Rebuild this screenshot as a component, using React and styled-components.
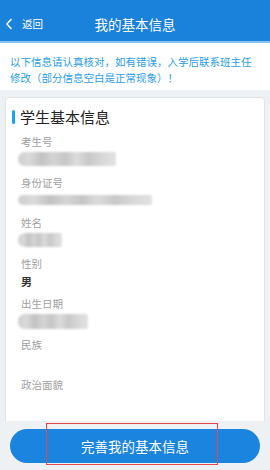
import styled, { createGlobalStyle } from "styled-components";

const GlobalStyle = createGlobalStyle`
  html, body {
    margin: 0;
    padding: 0;
  }
  body {
    font-family: "Noto Sans CJK SC", "Noto Sans", sans-serif;
  }
`;

const fields = [
  { label: "考生号", blur: { width: 98, height: 14 } },
  { label: "身份证号", blur: { width: 134, height: 10 } },
  { label: "姓名", blur: { width: 44, height: 14 } },
  { label: "性别", value: "男" },
  { label: "出生日期", blur: { width: 70, height: 15 } },
  { label: "民族" },
  { label: "政治面貌" },
  { label: "手机号" },
];

const App = () => {
  return (
    <>
      <GlobalStyle />
      <Screen>
        <Header>
          <BackButton>
            <svg width="8" height="12" viewBox="0 0 8 12">
              <path
                d="M6.5 1 L1.8 6 L6.5 11"
                fill="none"
                stroke="#fff"
                strokeWidth="1.4"
              />
            </svg>
            <span>返回</span>
          </BackButton>
          <HeaderTitle>我的基本信息</HeaderTitle>
          <div />
        </Header>
        <Notice>
          以下信息请认真核对，如有错误，入学后联系班主任修改（部分信息空白是正常现象）！
        </Notice>
        <Content>
          <Card>
            <CardTitle>学生基本信息</CardTitle>
            {fields.map((f) => (
              <Field key={f.label}>
                <Label>{f.label}</Label>
                <Value>
                  {f.value}
                  {f.blur && (
                    <Blurred
                      style={{ width: f.blur.width, height: f.blur.height }}
                    />
                  )}
                </Value>
              </Field>
            ))}
          </Card>
        </Content>
        <Footer>
          <SubmitButton>完善我的基本信息</SubmitButton>
          <Mark />
        </Footer>
      </Screen>
    </>
  );
};

const Screen = styled.div`
  width: 270px;
  height: 470px;
  display: flex;
  flex-direction: column;
  background-color: #eef1f4;
  overflow: hidden;
`;

const Header = styled.div`
  height: 43px;
  box-sizing: border-box;
  padding-top: 6px;
  flex-shrink: 0;
  display: grid;
  grid-template-columns: 60px 1fr 60px;
  align-items: center;
  background-color: #1b82dc;
  border-bottom: 2px solid #8cc0ee;
  color: white;
`;

const BackButton = styled.div`
  display: flex;
  align-items: center;
  gap: 9px;
  padding-left: 5px;
  font-size: 10.5px;
`;

const HeaderTitle = styled.div`
  text-align: center;
  font-size: 13.5px;
`;

const Notice = styled.div`
  flex-shrink: 0;
  background-color: white;
  padding: 11px 10px 4px 10px;
  color: #2a9de6;
  font-size: 10.5px;
  line-height: 16px;
`;

const Content = styled.div`
  flex: 1;
  overflow: hidden;
  padding: 7px 5px 0 5px;
`;

const Card = styled.div`
  background-color: white;
  border: 1px solid #dde3e8;
  border-radius: 4px;
  padding: 8px 0 0 15px;
  min-height: 400px;
`;

const CardTitle = styled.div`
  position: relative;
  font-size: 15px;
  line-height: 22px;
  color: #222;
  margin-left: -1px;
  margin-bottom: 6px;
  &::before {
    content: "";
    position: absolute;
    left: -8px;
    top: 4px;
    width: 3px;
    height: 14px;
    border-radius: 2px;
    background-color: #1aa3f2;
  }
`;

const Field = styled.div`
  display: flex;
  flex-direction: column;
  margin-bottom: 6.5px;
`;

const Label = styled.div`
  font-size: 10.5px;
  line-height: 16px;
  color: #a0a0a0;
`;

const Value = styled.div`
  min-height: 18px;
  display: flex;
  align-items: center;
  font-size: 11px;
  font-weight: bold;
  color: #333;
`;

const Blurred = styled.div`
  margin-left: -3px;
  border-radius: 7px 2px 2px 7px;
  background: linear-gradient(
    to right,
    #cfcfcf 0%,
    #dadada 12%,
    #c2c2c2 24%,
    #d4d4d4 36%,
    #c6c6c6 48%,
    #dcdcdc 60%,
    #c8c8c8 72%,
    #d6d6d6 84%,
    #e2e2e2 100%
  );
  filter: blur(0.8px);
`;

const Footer = styled.div`
  position: relative;
  height: 49px;
  flex-shrink: 0;
  box-sizing: border-box;
  padding: 8px 10px 7px 10px;
  background-color: #eef1f4;
`;

const SubmitButton = styled.button`
  width: 100%;
  height: 34px;
  border: none;
  outline: none;
  border-radius: 17px;
  background-color: #1b84df;
  color: white;
  font-family: inherit;
  font-size: 13.5px;
  padding: 0;
`;

const Mark = styled.div`
  position: absolute;
  left: 46px;
  top: 2px;
  width: 172px;
  height: 42px;
  box-sizing: border-box;
  border: 1.5px solid #e4484d;
  pointer-events: none;
`;

export default App;
